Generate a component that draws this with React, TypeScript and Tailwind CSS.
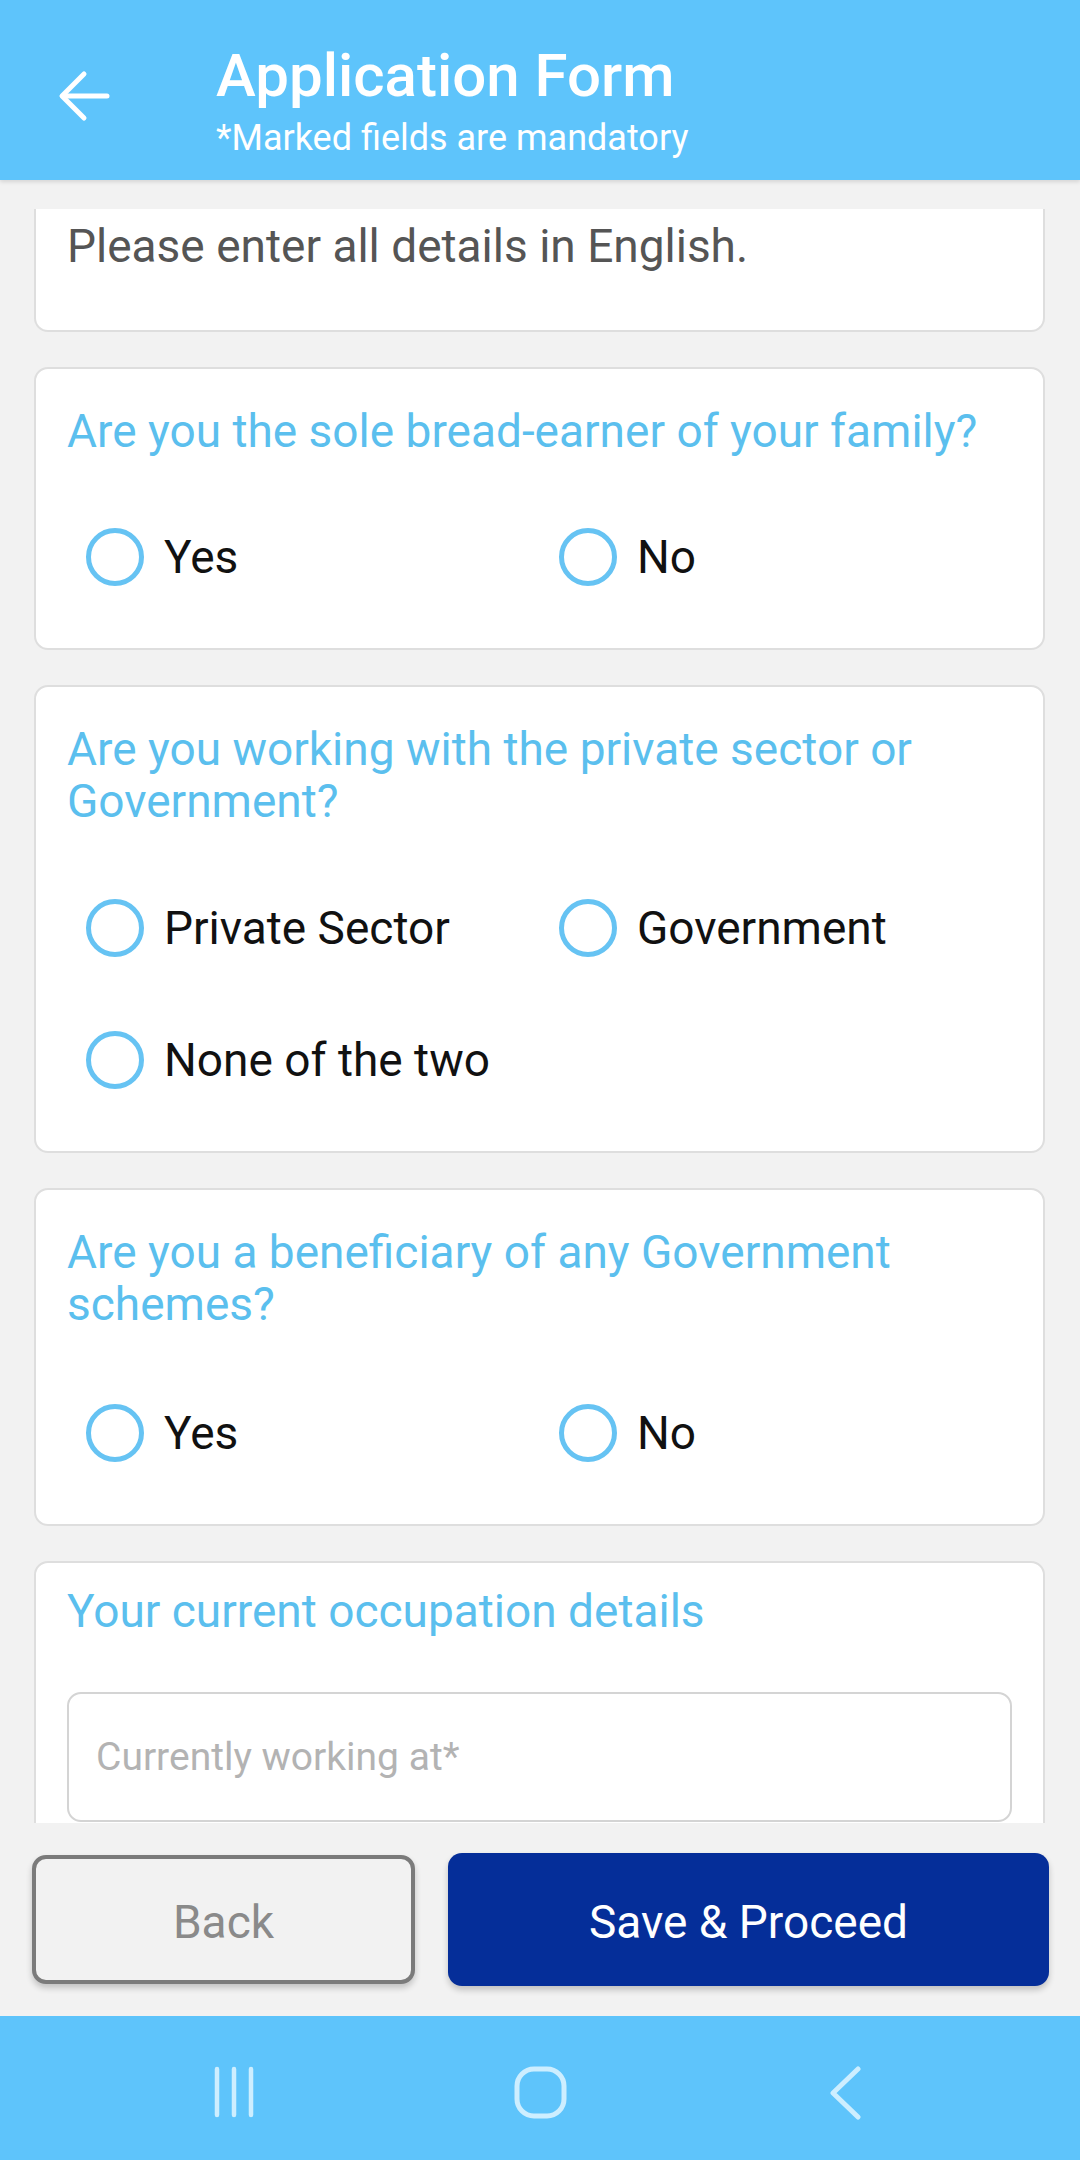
import React from "react";

const font = { fontFamily: "Roboto, 'Noto Sans', sans-serif" };

function Radio({ label }: { label: string }) {
  return (
    <div className="flex items-center h-[58px]">
      <div className="w-[58px] h-[58px] rounded-full border-[5px] border-[#66c3f3] shrink-0" />
      <span className="ml-[20px] text-[46px] leading-none text-[#111]">{label}</span>
    </div>
  );
}

function Question({ lines }: { lines: string[] }) {
  return (
    <div className="text-[46px] leading-[52px] text-[#5bbfee]">
      {lines.map((l, i) => (
        <div key={i}>{l}</div>
      ))}
    </div>
  );
}

function Card({ children, className = "" }: { children: React.ReactNode; className?: string }) {
  return (
    <div className={"bg-white border-2 border-[#dedede] rounded-[14px] " + className}>
      {children}
    </div>
  );
}

export default function App() {
  return (
    <div className="w-[1080px] h-[2160px] flex flex-col bg-[#f2f2f2]" style={font}>
      {/* Header */}
      <div className="h-[180px] bg-[#5ec4fb] flex shrink-0 shadow-[0_2px_4px_rgba(0,0,0,0.12)] z-10">
        <div className="w-[216px] pl-[58px] pt-[70px]">
          <svg width="52" height="52" viewBox="0 0 52 52" fill="none" stroke="white" strokeWidth="5" strokeLinecap="round" strokeLinejoin="round">
            <path d="M49 26H5" />
            <path d="M26 4L4 26l22 22" />
          </svg>
        </div>
        <div className="pt-[44px] text-white">
          <div className="text-[60px] leading-[64px] font-medium">Application Form</div>
          <div className="text-[36px] leading-[40px] mt-[10px]">*Marked fields are mandatory</div>
        </div>
      </div>

      {/* Scrolling form */}
      <div className="flex-1 overflow-hidden pl-[34px] pr-[35px] pt-[29px] flex flex-col gap-[35px]">
        <div className="bg-white border-2 border-t-0 border-[#dedede] rounded-b-[14px] h-[123px] shrink-0 pl-[31px] pt-[11px]">
          <div className="text-[46px] leading-[52px] text-[#555]">Please enter all details in English.</div>
        </div>

        <Card className="shrink-0 pl-[31px] pt-[36px] pb-[62px]">
          <Question lines={["Are you the sole bread-earner of your family?"]} />
          <div className="grid grid-cols-[473px_1fr] pl-[19px] mt-[71px]">
            <Radio label="Yes" />
            <Radio label="No" />
          </div>
        </Card>

        <Card className="shrink-0 pl-[31px] pt-[36px] pb-[62px]">
          <Question lines={["Are you working with the private sector or", "Government?"]} />
          <div className="grid grid-cols-[473px_1fr] gap-y-[74px] pl-[19px] mt-[72px]">
            <Radio label="Private Sector" />
            <Radio label="Government" />
            <Radio label="None of the two" />
          </div>
        </Card>

        <Card className="shrink-0 pl-[31px] pt-[36px] pb-[62px]">
          <Question lines={["Are you a beneficiary of any Government", "schemes?"]} />
          <div className="grid grid-cols-[473px_1fr] pl-[19px] mt-[74px]">
            <Radio label="Yes" />
            <Radio label="No" />
          </div>
        </Card>

        <Card className="shrink-0 px-[31px] pt-[22px] pb-[40px]">
          <Question lines={["Your current occupation details"]} />
          <div className="mt-[55px] h-[130px] border-2 border-[#d4d4d4] rounded-[14px] flex items-center pl-[27px]">
            <span className="text-[39px] text-[#b3b3b3]">Currently working at*</span>
          </div>
        </Card>
      </div>

      {/* Bottom buttons */}
      <div className="h-[193px] shrink-0 flex gap-[33px] pl-[32px] pr-[31px] pt-[32px] bg-[#f2f2f2]">
        <button className="w-[383px] h-[129px] pt-[6px] rounded-[14px] border-[4px] border-[#7b7b7b] bg-[#f2f2f2] text-[46px] text-[#8a8a8a] shadow-[0_4px_6px_rgba(0,0,0,0.2)]">
          Back
        </button>
        <button className="flex-1 h-[133px] pt-[6px] -mt-[2px] rounded-[14px] bg-[#052e99] text-[46px] text-white shadow-[0_4px_6px_rgba(0,0,0,0.2)]">
          Save &amp; Proceed
        </button>
      </div>

      {/* System nav bar */}
      <div className="h-[144px] shrink-0 bg-[#5ec4fb] flex items-start pt-[50px]">
        <div className="flex w-full justify-center">
          <svg width="50" height="52" viewBox="0 0 50 52" className="ml-[-6px]" fill="none" stroke="#cdeeff" strokeWidth="4.5" strokeLinecap="round">
            <path d="M5 3v46M22 3v46M39 3v46" />
          </svg>
          <svg width="56" height="54" viewBox="0 0 56 54" className="ml-[251px]" fill="none" stroke="#cdeeff" strokeWidth="5">
            <rect x="4" y="3" width="47" height="47" rx="17" />
          </svg>
          <svg width="34" height="54" viewBox="0 0 34 54" className="ml-[259px]" fill="none" stroke="#cdeeff" strokeWidth="5" strokeLinecap="round" strokeLinejoin="round">
            <path d="M30 3L5 27l25 24" />
          </svg>
        </div>
      </div>
    </div>
  );
}
